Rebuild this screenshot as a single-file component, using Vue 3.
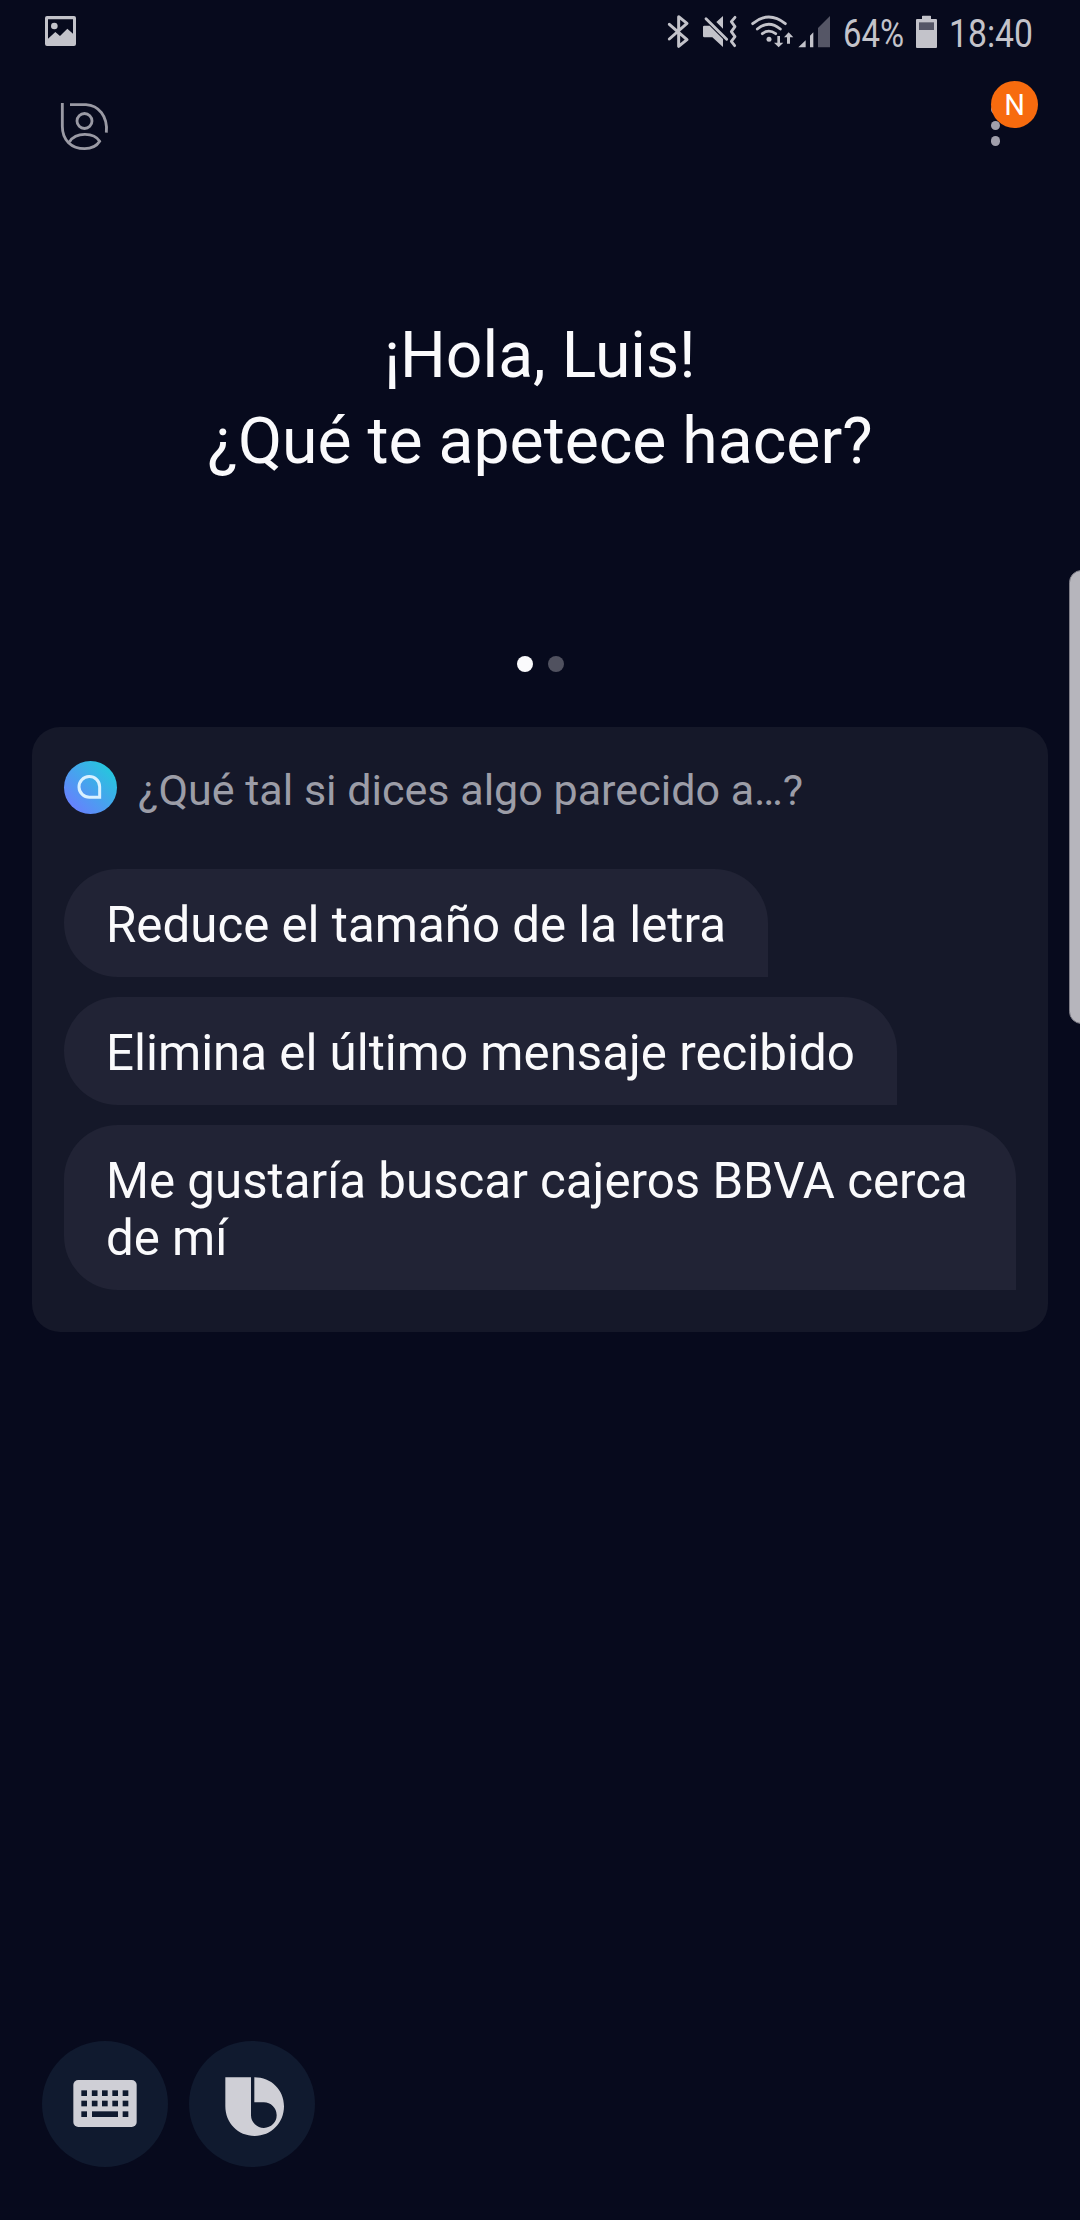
<script setup>
const suggestions = [
  'Reduce el tamaño de la letra',
  'Elimina el último mensaje recibido',
  'Me gustaría buscar cajeros BBVA cerca de mí',
]
const keys = [154, 185.5, 216, 247, 278]
</script>

<template>
  <div class="screen">
    <header class="status">
      <svg class="photo" width="31" height="70" viewBox="75 0 93 210">
        <path fill-rule="evenodd" d="M81 48H162Q168 48 168 54V132Q168 138 162 138H81Q75 138 75 132V54Q75 48 81 48ZM84 58V116L106 96L120 108L142 86L159 101V58Z" />
        <circle cx="103" cy="78" r="10" />
      </svg>
      <div class="status-right">
        <svg width="24" height="70" viewBox="45 0 72 210">
          <path class="line" stroke-width="9" stroke-linejoin="round" stroke-linecap="round" d="M55 73L108 119L83 139V50L108 70L55 117" />
        </svg>
        <svg class="gap-l" width="38" height="70" viewBox="150 0 114 210">
          <path d="M156 80Q156 77 160 77H176L216 117V141L184 112H160Q156 112 156 108ZM196 66L216 48V86Z" />
          <path class="line" stroke-width="8.500" stroke-linecap="round" d="M165 56L227 118" />
          <path class="line" stroke-width="8.500" stroke-linecap="round" stroke-linejoin="round" d="M252 52L241 65L252 80L241 95L252 110L241 124L251 137" />
        </svg>
        <svg class="gap-l" width="45" height="70" viewBox="297 0 135 210">
          <g class="line" stroke-width="8.500" stroke-linecap="round">
            <path d="M305 71Q353 31 403 71" />
            <path d="M319 87Q353 58 388 87" />
            <path d="M334 101Q353 86 374 101" />
          </g>
          <circle cx="354" cy="118" r="7.500" />
          <path d="M379 108H387V128H397L383 142L369 128H379ZM408 131H417V112H427L413 97L399 112H408Z" />
        </svg>
        <svg class="gap-s" width="33" height="70" viewBox="441 0 99 210">
          <path d="M442 142L464 121V142ZM477 142V107L487 97V142Z" />
          <path class="faint" d="M501 142V84L537 48V142Z" />
        </svg>
        <svg class="gap-m" width="61" height="70" viewBox="0 0 61 70">
          <text x="0" y="46.7" textLength="61" lengthAdjust="spacingAndGlyphs">64%</text>
        </svg>
        <svg class="gap-m" width="21" height="70" viewBox="255 0 63 210">
          <path d="M273 57V49Q273 47 275 47H298Q300 47 300 49V57H315Q318 57 318 60V141Q318 144 315 144H258Q255 144 255 141V60Q255 57 258 57Z" />
          <path class="level" d="M264 67H309V90H264Z" />
        </svg>
        <svg class="gap-m" width="84" height="70" viewBox="0 0 84 70">
          <text x="0" y="46.7" textLength="84" lengthAdjust="spacingAndGlyphs">18:40</text>
        </svg>
      </div>
    </header>

    <nav class="bar">
      <svg width="50" height="50" viewBox="120 306 150 150">
        <g class="outline" stroke-width="8.500">
          <path d="M127 309V379C127 421 154 446 194 446C214 446 231 437 239 424C222 396 167 396 149 425" />
          <path d="M150 314H198C235 316 264 348 259 398" />
          <circle cx="193.500" cy="363" r="22.500" />
        </g>
      </svg>
      <div class="more">
        <i></i><i></i><i></i>
        <span class="badge">N</span>
      </div>
    </nav>

    <h1>¡Hola, Luis!<br />¿Qué te apetece hacer?</h1>

    <div class="pager"><i class="on"></i><i></i></div>

    <section class="card">
      <div class="hint">
        <svg width="53" height="53" viewBox="0 0 159 159">
          <defs>
            <linearGradient id="orb" x1="0.1" y1="0.9" x2="0.85" y2="0.15">
              <stop offset="0" stop-color="#6a7dff" />
              <stop offset="1" stop-color="#27c5de" />
            </linearGradient>
          </defs>
          <circle cx="79.500" cy="79.500" r="79.500" fill="url(#orb)" />
          <path class="orb-mark" d="M107 108.500H77A31 31 0 1 1 107 77Z" />
        </svg>
        <p>¿Qué tal si dices algo parecido a…?</p>
      </div>
      <ul>
        <li v-for="s in suggestions" :key="s">{{ s }}</li>
      </ul>
    </section>

    <footer>
      <button aria-label="Teclado">
        <svg width="126" height="126" viewBox="36 63 378 378">
          <rect x="130" y="180" width="190" height="141" rx="15" />
          <g class="hole">
            <template v-for="x in keys" :key="x">
              <rect :x="x" y="211" width="17" height="17" />
              <rect :x="x" y="242" width="17" height="17" />
            </template>
            <rect x="154" y="274" width="17" height="17" />
            <rect x="186" y="274" width="78" height="17" />
            <rect x="278" y="274" width="17" height="17" />
          </g>
        </svg>
      </button>
      <button aria-label="Bixby">
        <svg width="126" height="126" viewBox="477 63 378 378">
          <path d="M586 172H663V286A38.500 38.500 0 1 0 701 247H673V172C724 172 762 210 762 259C762 309 723 348 674 348C624 348 586 309 586 259Z" />
        </svg>
      </button>
    </footer>

    <div class="edge"></div>
  </div>
</template>

<style>
body {
  margin: 0;
  background: #070a1d;
}
</style>

<style scoped>
.screen {
  position: relative;
  box-sizing: border-box;
  width: 1080px;
  height: 2220px;
  overflow: hidden;
  display: flex;
  flex-direction: column;
  background: #070a1d;
  color: #fafafc;
  font-family: Roboto, sans-serif;
}
svg {
  display: block;
  flex: none;
  overflow: visible;
}
.status {
  display: flex;
  justify-content: space-between;
  height: 70px;
  padding: 0 47px 0 45px;
  fill: #c3c3ca;
}
.status-right {
  display: flex;
}
.status text {
  font-size: 39px;
}
.line {
  fill: none;
  stroke: #c3c3ca;
}
.faint,
.level {
  fill: #555666;
}
.gap-l {
  margin-left: 11px;
}
.gap-m {
  margin-left: 12px;
}
.gap-s {
  margin-left: 3px;
}
.bar {
  display: flex;
  justify-content: space-between;
  height: 62px;
  padding: 32px 80px 0 60px;
}
.outline {
  fill: none;
  stroke: #9a9aa4;
}
.more {
  position: relative;
  display: flex;
  flex-direction: column;
  align-items: flex-end;
  gap: 6.3px;
  width: 10px;
  padding-top: 3px;
}
.more i {
  width: 9.4px;
  height: 9.4px;
  flex: none;
  border-radius: 50%;
  background: #a09fab;
}
.badge {
  position: absolute;
  left: 1px;
  top: -21px;
  width: 47px;
  height: 47px;
  border-radius: 50%;
  background: #f76b0e;
  color: #fff;
  font-size: 29px;
  line-height: 49px;
  text-align: center;
}
h1 {
  margin: 148px 0 0;
  font-size: 64.25px;
  font-weight: 400;
  line-height: 86px;
  text-align: center;
}
.pager {
  display: flex;
  justify-content: center;
  gap: 15px;
  margin-top: 172px;
}
.pager i {
  width: 16px;
  height: 16px;
  border-radius: 50%;
  background: #50515f;
}
.pager .on {
  background: #fafafc;
}
.card {
  box-sizing: border-box;
  height: 605px;
  margin: 55px 32px 0;
  padding: 34px 32px 0;
  border-radius: 28px;
  background: #151829;
}
.hint {
  display: flex;
  height: 108px;
}
.hint p {
  margin: 5px 0 0 21px;
  color: #9c9da7;
  font-size: 43.05px;
  line-height: 50px;
  white-space: nowrap;
}
.orb-mark {
  fill: none;
  stroke: #d9f1ff;
  stroke-width: 9px;
}
ul {
  display: flex;
  flex-direction: column;
  align-items: flex-start;
  gap: 20px;
  margin: 0;
  padding: 0;
  list-style: none;
}
li {
  box-sizing: border-box;
  padding: 28px 42px 23px;
  border-radius: 54px 54px 0 54px;
  background: #212335;
  font-size: 49.25px;
  line-height: 57px;
}
footer {
  display: flex;
  gap: 21px;
  margin: auto 0 53px 42px;
}
button {
  width: 126px;
  height: 126px;
  padding: 0;
  border: 0;
  border-radius: 50%;
  background: #101a2f;
  fill: #cfcfd6;
}
.hole {
  fill: #101a2f;
}
.edge {
  position: absolute;
  right: -14px;
  top: 570px;
  box-sizing: border-box;
  width: 25px;
  height: 454px;
  border: 1.5px solid #7d7c86;
  border-radius: 14px;
  background: #b6b5bc;
}
</style>
